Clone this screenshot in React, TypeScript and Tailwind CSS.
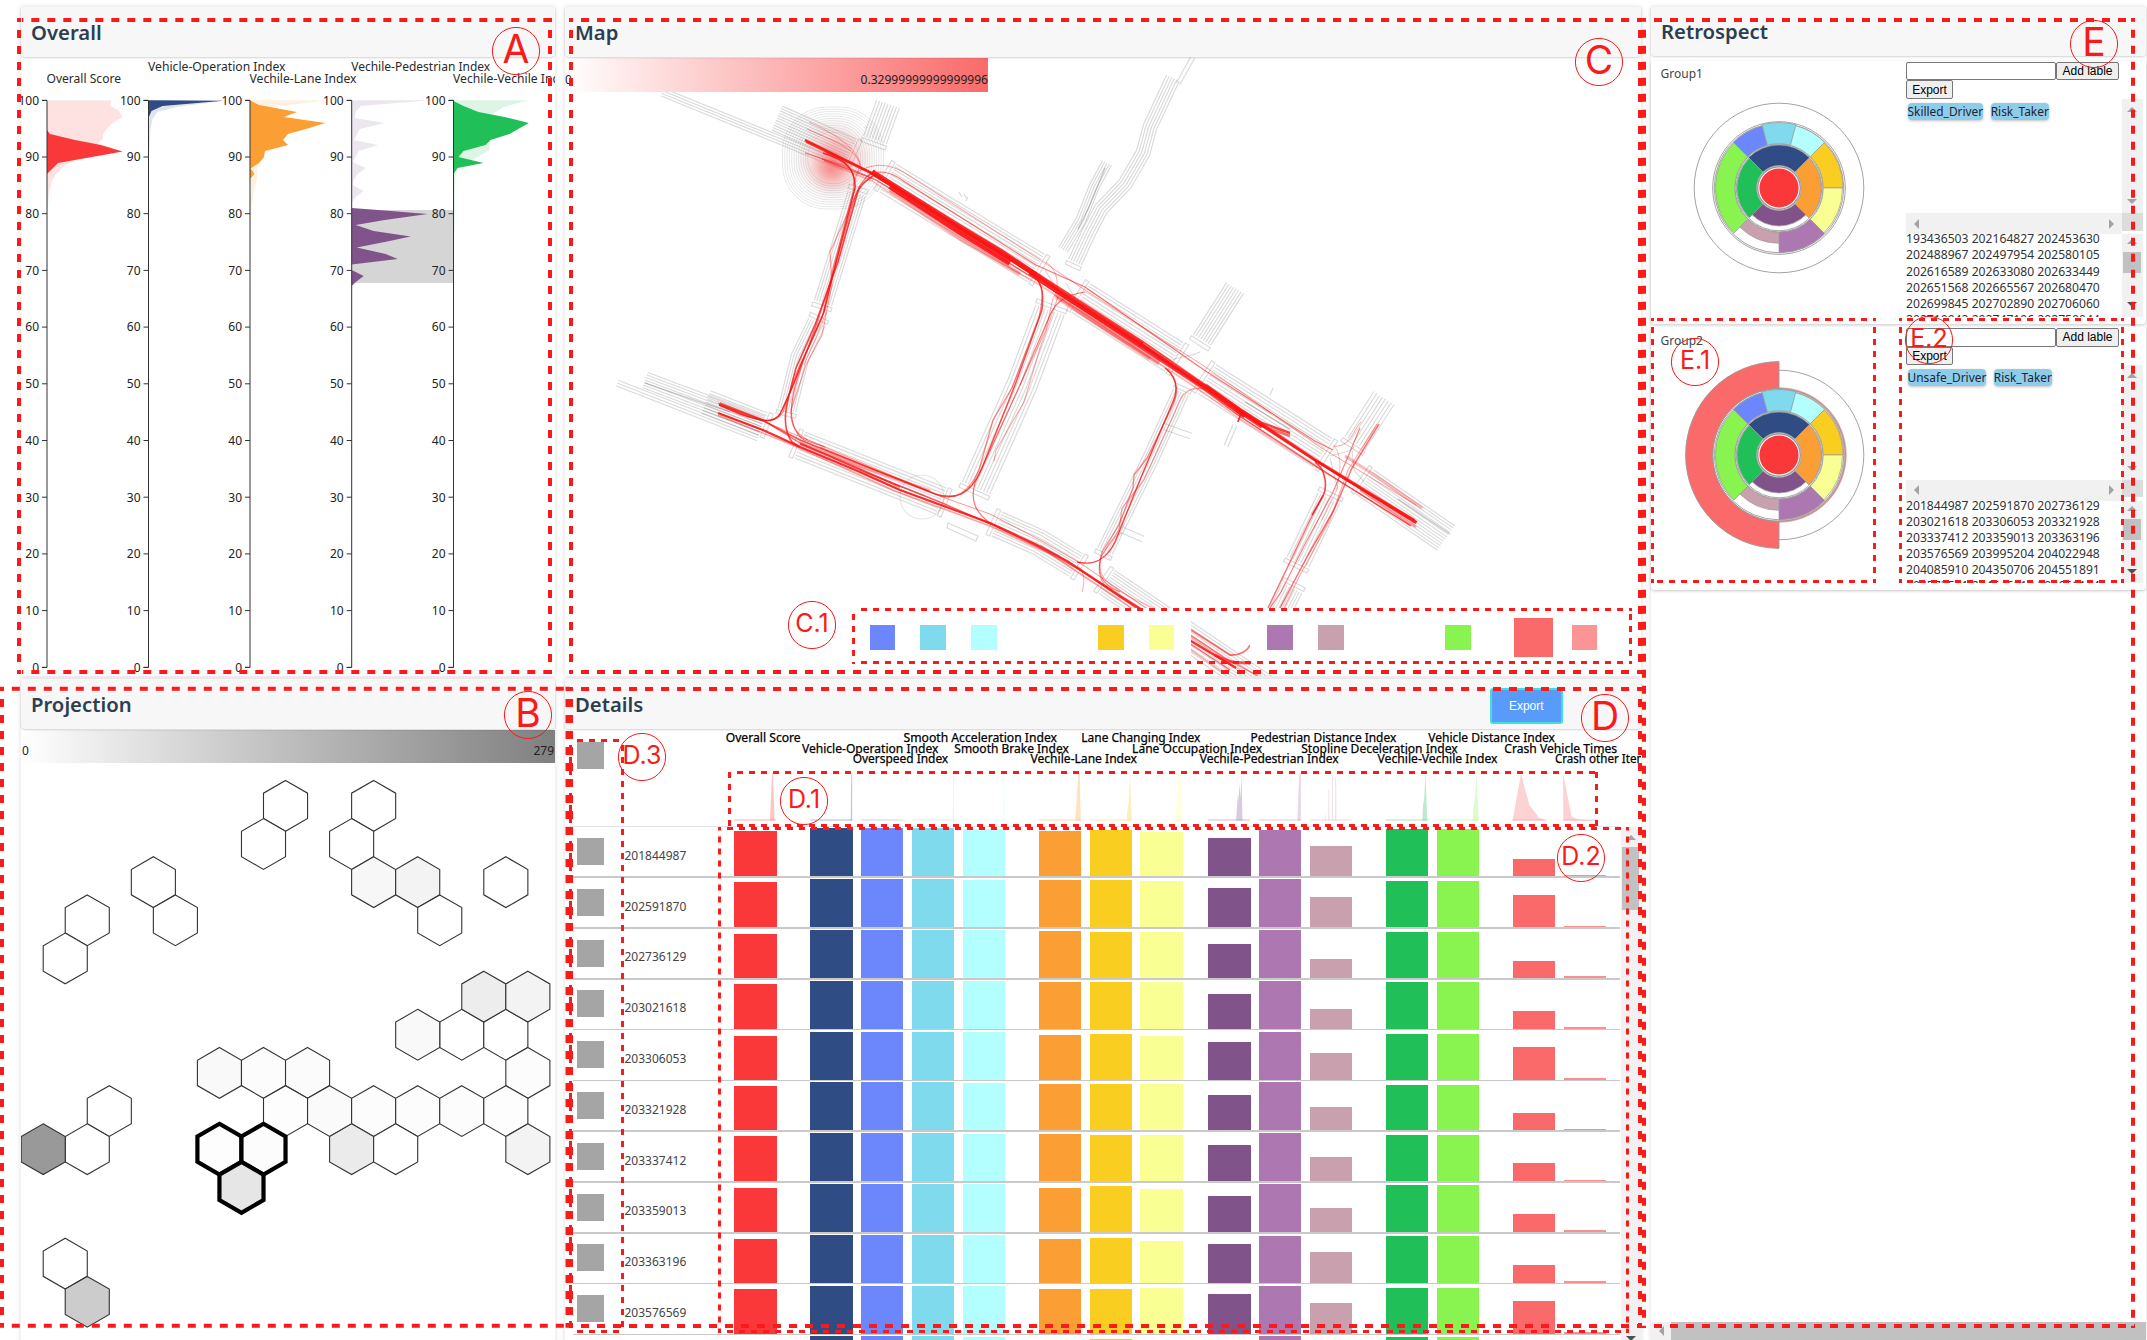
import React from "react";

type Pt = [number, number];

const C = {
  red: "#fb3839",
  navy: "#2f4d84",
  blue: "#6c87fc",
  cyan: "#80daed",
  ice: "#b3ffff",
  orange: "#fb9f35",
  yellow: "#f9ce20",
  lemon: "#f9ff92",
  purple: "#80548a",
  lilac: "#ad78b1",
  mauve: "#c9a1ae",
  green: "#20bf58",
  lime: "#89f34f",
  coral: "#fa6a6a",
  pink: "#fb9494",
};

const FONT = "font-['Noto_Sans','Open_Sans',sans-serif]";

const pts = (p: Pt[]) => p.map(([x, y]) => `${x.toFixed(2)},${y.toFixed(2)}`).join(" ");

/* ---------- Panels ---------- */

function Header({ title, children, short }: { title: string; children?: React.ReactNode; short?: boolean }) {
  return (
    <div
      className={
        "relative z-10 flex shrink-0 justify-between rounded-b bg-[#f7f7f7] shadow-[0_1px_2px_rgba(0,0,0,0.18)] " +
        (short ? "h-[49px]" : "h-[50px]")
      }
    >
      <h2
        className={
          "pl-[10px] text-[20.3px] leading-[26px] font-semibold text-[#2c3e50] " + (short ? "pt-[11px]" : "pt-[12px]")
        }
      >
        {title}
      </h2>
      {children}
    </div>
  );
}

/* ---------- Overall ---------- */

interface Axis {
  x: number;
  label: string;
  w: number;
  ly: number;
  color: string;
  pale: Pt[];
  solid: Pt[];
}

const AXES: Axis[] = [
  {
    x: 47, label: "Overall Score", w: 74.5, ly: 83.3, color: C.red,
    pale: [[0, 100.3], [64, 100.3], [63, 106], [71, 110], [75.6, 117], [64, 124], [56, 134], [56, 139], [50, 144], [28, 160], [17, 166], [9, 174], [5, 181], [2, 192], [1, 205], [0, 215]],
    solid: [[0, 130], [3, 134], [28, 140], [54, 145], [75.6, 151.5], [45, 157], [11, 163], [8, 166], [0, 174]],
  },
  {
    x: 148.5, label: "Vehicle-Operation Index", w: 137.5, ly: 70.7, color: C.navy,
    pale: [[0, 100.3], [75, 100.7], [28, 107], [9, 112], [4, 119], [1.8, 130], [0.8, 150], [0, 165]],
    solid: [[0, 100.3], [75, 100.7], [14, 106], [3, 111], [0, 118]],
  },
  {
    x: 250, label: "Vechile-Lane Index", w: 107, ly: 83.3, color: C.orange,
    pale: [[0, 100.3], [77, 100.3], [23, 107], [20, 140], [10, 163], [7, 170], [7, 180], [4, 190], [2, 205], [1, 215], [0, 230]],
    solid: [[0, 100.3], [9, 105], [47, 112], [34, 117], [75.3, 123], [56, 129], [38, 134], [33, 140], [38, 145], [15, 151], [14, 157], [9, 163], [0.5, 168.5], [4.5, 174], [0, 179]],
  },
  {
    x: 351.7, label: "Vechile-Pedestrian Index", w: 139, ly: 70.7, color: C.purple,
    pale: [[0, 100.3], [78, 100.3], [9, 106], [4, 112], [3, 118], [33, 123], [8, 129], [5, 135], [2, 140], [26, 145], [7, 151], [4, 157], [1, 162], [14, 168], [6, 174], [2, 180], [1, 185], [12, 191], [4, 197], [0, 203]],
    solid: [[0, 208], [33, 210.5], [76, 214], [33, 220], [4, 225], [22, 231], [59, 236.5], [33, 242], [5, 247.5], [34, 254], [46, 259], [0, 264.5], [0, 270], [12, 276], [4, 282], [0, 286]],
  },
  {
    x: 453.5, label: "Vechile-Vechile Index", w: 120, ly: 83.3, color: C.green,
    pale: [[0, 100.3], [75, 100.3], [50, 107], [38, 115], [36, 150], [2, 170], [1.5, 190], [1, 230], [0, 240]],
    solid: [[0, 101], [10, 106], [25, 112], [51, 117], [75.3, 123], [56, 134], [37, 140], [32, 145], [10, 151], [5, 157], [30, 163], [4, 168], [0, 174]],
  },
];

function OverallChart() {
  return (
    <svg viewBox="21 57 534 619" className="block h-[619px] w-[534px]">
      {AXES.map((a) => (
        <g key={a.label}>
          {a.label.includes("Pedestrian") && <rect x={351.7} y={210} width={101.8} height={73} fill="#d5d5d5" />}
          <polygon points={pts(a.pale.map(([x, y]) => [x + a.x, y]))} fill={a.color} opacity={0.15} />
          <polygon points={pts(a.solid.map(([x, y]) => [x + a.x, y]))} fill={a.color} />
          <path d={`M${a.x - 5} 100.5H${a.x}V667.5H${a.x - 5}`} fill="none" stroke="#333" />
          {Array.from({ length: 11 }, (_, i) => {
            const y = 667.3 - i * 56.7;
            return (
              <g key={i}>
                <line x1={a.x - 5} x2={a.x} y1={y} y2={y} stroke="#333" />
                <text x={a.x - 8} y={y + 4.3} textAnchor="end" fontSize={12} fill="#222">
                  {i * 10}
                </text>
              </g>
            );
          })}
          <text x={a.x - 0.5} y={a.ly} fontSize={12} fill="#2a2a2a" textLength={a.w} lengthAdjust="spacingAndGlyphs">
            {a.label}
          </text>
        </g>
      ))}
    </svg>
  );
}

/* ---------- Projection ---------- */

// [half-column index, row index, fill]
const HEXES: [number, number, string][] = [
  [11, -9, "#fff"], [10, -8, "#fff"], [15, -9, "#fff"], [14, -8, "#fff"], [15, -7, "#f7f7f7"], [17, -7, "#f3f3f3"],
  [18, -6, "#fff"], [21, -7, "#fff"], [5, -7, "#fff"], [6, -6, "#fff"], [2, -6, "#fff"], [1, -5, "#fff"],
  [19, -3, "#fff"], [21, -3, "#fff"], [20, -4, "#ededed"], [22, -4, "#f3f3f3"], [17, -3, "#f9f9f9"], [22, -2, "#fcfcfc"],
  [8, -2, "#f9f9f9"], [10, -2, "#fcfcfc"], [12, -2, "#fbfbfb"], [11, -1, "#fdfdfd"], [13, -1, "#fafafa"],
  [15, -1, "#fcfcfc"], [17, -1, "#fcfcfc"], [19, -1, "#fcfcfc"], [21, -1, "#fdfdfd"], [3, -1, "#fff"],
  [2, 0, "#fff"], [0, 0, "#999"], [14, 0, "#ebebeb"], [16, 0, "#fff"], [22, 0, "#f3f3f3"], [1, 3, "#fff"], [2, 4, "#ccc"],
];
const SELECTED: [number, number, string][] = [[8, 0, "#fdfdfd"], [10, 0, "#fcfcfc"], [9, 1, "#e6e6e6"]];

function Hex({ i, k, fill, w, c }: { i: number; k: number; fill: string; w: number; c: string }) {
  const x = 43.2 + 22.03 * i;
  const y = 1149.2 + 38.15 * k;
  const a = 22.03;
  const r = 25.4;
  return (
    <polygon
      points={pts([[x, y - r], [x + a, y - r / 2], [x + a, y + r / 2], [x, y + r], [x - a, y + r / 2], [x - a, y - r / 2]])}
      fill={fill}
      stroke={c}
      strokeWidth={w}
    />
  );
}

function Projection() {
  return (
    <>
      <div className="mt-px flex h-[33px] items-center justify-between bg-linear-to-r from-white to-[#808080] px-px pt-[9px] text-[12px] text-[#222]">
        <span>0</span>
        <span>279</span>
      </div>
      <svg viewBox="21 763 534 577" className="block h-[577px] w-[534px]">
        {HEXES.map(([i, k, f]) => (
          <Hex key={`${i},${k}`} i={i} k={k} fill={f} w={1.1} c="#333" />
        ))}
        {SELECTED.map(([i, k, f]) => (
          <Hex key={`${i},${k}`} i={i} k={k} fill={f} w={4.2} c="#000" />
        ))}
      </svg>
    </>
  );
}

/* ---------- Map ---------- */

function offset(line: Pt[], d: number): Pt[] {
  return line.map((p, i) => {
    const a = line[Math.max(0, i - 1)];
    const b = line[Math.min(line.length - 1, i + 1)];
    const dx = b[0] - a[0];
    const dy = b[1] - a[1];
    const l = Math.hypot(dx, dy);
    return [p[0] - (dy / l) * d, p[1] + (dx / l) * d];
  });
}

interface RoadDef {
  line: Pt[];
  w: number;
  n: number;
  caps?: "both" | "start" | "end";
}

const ROADS: RoadDef[] = [
  { line: [[662, 92], [775, 138], [845, 167]], w: 4, n: 4 },
  { line: [[777, 118], [851, 151]], w: 13, n: 11, caps: "end" },
  { line: [[888, 104], [875, 140]], w: 12, n: 9, caps: "end" },
  { line: [[888, 178], [1036, 268]], w: 16, n: 12, caps: "both" },
  { line: [[1081, 298], [1174, 357]], w: 17, n: 12, caps: "both" },
  { line: [[1207, 379], [1323, 453]], w: 17, n: 12, caps: "both" },
  { line: [[1365, 482], [1446, 538]], w: 15, n: 12, caps: "start" },
  { line: [[857, 193], [823, 303]], w: 9, n: 8, caps: "both" },
  { line: [[817, 322], [800, 357], [787, 410]], w: 9, n: 8, caps: "both" },
  { line: [[645, 380], [762, 424]], w: 8, n: 7 },
  { line: [[617, 383], [758, 438]], w: 3, n: 3 },
  { line: [[706, 402], [763, 424]], w: 12, n: 9, caps: "end" },
  { line: [[800, 445], [941, 501]], w: 14, n: 10, caps: "both" },
  { line: [[997, 524], [1038, 542], [1076, 565]], w: 13, n: 10, caps: "both" },
  { line: [[1107, 582], [1270, 692]], w: 14, n: 11, caps: "start" },
  { line: [[1050, 310], [1022, 385], [976, 488]], w: 15, n: 10, caps: "both" },
  { line: [[1181, 392], [1150, 460], [1105, 551]], w: 8, n: 7, caps: "both" },
  { line: [[1329, 498], [1298, 562]], w: 12, n: 9, caps: "both" },
  { line: [[1292, 588], [1272, 628]], w: 11, n: 9, caps: "start" },
  { line: [[1384, 398], [1355, 443]], w: 12, n: 8, caps: "end" },
  { line: [[1235, 288], [1202, 340]], w: 10, n: 8, caps: "end" },
  { line: [[1107, 163], [1094, 187], [1081, 220], [1063, 250]], w: 5, n: 5 },
  { line: [[1173, 78], [1150, 127], [1143, 153], [1125, 184], [1101, 209], [1089, 232], [1075, 262]], w: 7, n: 6, caps: "end" },
  { line: [[1193, 57], [1178, 84]], w: 2, n: 2 },
  { line: [[1165, 427], [1191, 436]], w: 3, n: 2 },
  { line: [[1120, 529], [1143, 539]], w: 3, n: 2 },
  { line: [[1235, 425], [1226, 446]], w: 2, n: 2 },
];

function Road({ line, w, n, caps }: RoadDef) {
  const cap = (p: Pt, q: Pt) => {
    const dx = p[0] - q[0];
    const dy = p[1] - q[1];
    const l = Math.hypot(dx, dy);
    const u: Pt = [dx / l, dy / l];
    const v: Pt = [-u[1], u[0]];
    const at = (s: number, t: number): Pt => [p[0] + u[0] * s + v[0] * t, p[1] + u[1] * s + v[1] * t];
    return <polygon points={pts([at(2, -w - 1), at(6, -w - 1), at(6, w + 1), at(2, w + 1)])} />;
  };
  const m = line.length;
  return (
    <g>
      {Array.from({ length: n }, (_, i) => (
        <polyline key={i} points={pts(offset(line, -w + (2 * w * i) / (n - 1)))} />
      ))}
      {(caps === "both" || caps === "start") && cap(line[0], line[1])}
      {(caps === "both" || caps === "end") && cap(line[m - 1], line[m - 2])}
    </g>
  );
}

// [path, opacity, width]
const TRIPS: [string, number, number][] = [
  ["M805 140L878 176L1035 275L1080 305L1142 345L1204 387L1240 411L1313 459L1416 523", 0.95, 2.4],
  ["M806 142L868 172L1035 272L1080 301L1142 341L1204 384L1240 409L1315 459L1415 520", 0.8, 1.6],
  ["M822 159L876 180L1035 279L1080 308L1142 349L1204 390L1238 415L1311 463L1411 526", 0.7, 1.3],
  ["M824 161L872 181L960 240L1038 284L1080 311L1142 352L1204 393L1240 419L1315 466L1410 525", 0.3, 1.5],
  ["M872 172L915 199L960 227L1000 251L1036 275", 0.9, 5.5],
  ["M890 186L960 232L1010 263", 0.9, 6],
  ["M890 190L960 237L1020 274", 0.35, 4],
  ["M1030 272L1058 291L1100 318L1142 345", 0.9, 6],
  ["M1056 293L1100 323L1160 362", 0.35, 8],
  ["M1056 297L1100 326L1150 359", 0.25, 4],
  ["M1140 344L1174 367L1206 388L1245 416", 0.9, 5],
  ["M1206 385L1240 409L1262 423L1290 433", 0.8, 2.4],
  ["M1236 410L1262 426L1290 436", 0.6, 2.4],
  ["M1240 412L1262 427", 0.8, 3.5],
  ["M807 129C828 139 856 147 860 165L853 185", 0.4, 1],
  ["M809 122C832 132 862 150 861 170", 0.35, 1],
  ["M805 153L842 165L872 178", 0.5, 1.3],
  ["M823 153C848 160 856 172 855 188L836 262L824 312L802 362C792 390 784 406 780 414C774 424 760 421 740 414L719 405", 0.9, 1.5],
  ["M826 152C850 160 857 175 853 192L834 265L822 318L797 372L783 412C776 423 765 422 750 417L718 403", 0.55, 1.2],
  ["M873 176C860 184 858 190 856 198L838 262L815 325L796 368C786 405 780 425 792 442L800 447", 0.8, 1.6],
  ["M875 170C860 180 856 192 851 210L834 270L818 320L803 362C791 395 784 425 804 440L825 447", 0.6, 1.2],
  ["M860 186L830 252L832 285L822 335L806 365L791 410C790 424 796 434 808 440", 0.4, 1.2],
  ["M828 306C824 308 822 312 826 313L815 340L804 365", 0.35, 1],
  ["M858 172C874 162 890 164 905 173L1045 263L1085 290L1204 366L1320 447L1345 462L1416 505", 0.4, 1],
  ["M868 176C880 168 892 172 905 182L1036 265L1085 287L1204 370L1315 441L1333 450", 0.6, 1.1],
  ["M1046 262C1060 272 1059 290 1053 298L1046 330L1020 385", 0.35, 1],
  ["M1035 277C1044 286 1043 297 1042 310L1015 385L982 468C970 496 955 500 935 494L800 440L760 419L719 404", 0.75, 1.5],
  ["M1037 279C1046 292 1041 305 1039 318L1012 388L993 420L979 470C968 495 954 499 940 496L820 447", 0.5, 1.3],
  ["M1085 292C1065 295 1056 302 1050 315L1020 385L975 483C970 500 975 512 990 523", 0.6, 1.2],
  ["M1058 297L1040 348L1024 402L996 450L994 461", 0.35, 1.1],
  ["M719 405L763 421L945 498L990 514L1040 540L1080 563L1130 597L1240 670", 0.45, 1],
  ["M718 413L763 430L800 447L860 472L900 490L990 523L1035 544L1067 561L1120 596L1191 641L1236 668", 0.9, 2.2],
  ["M720 403L763 420L800 443L870 474L940 502L995 526L1040 548L1080 570L1142 612L1230 670", 0.65, 1.4],
  ["M718 415L790 444L895 491L990 526L1050 554L1120 600L1225 674", 0.4, 1.5],
  ["M800 443L860 466L930 491", 0.4, 3],
  ["M800 444L860 469L900 487", 0.6, 2],
  ["M1165 368C1177 377 1179 389 1172 404L1142 475L1115 542C1106 560 1094 566 1077 562", 0.8, 1.4],
  ["M1167 369C1179 381 1178 393 1173 405L1147 458L1134 475L1133 488L1119 525L1102 552C1096 572 1100 584 1120 592", 0.5, 1.3],
  ["M1204 389C1188 386 1181 394 1175 412L1144 480L1122 508L1119 530L1101 557C1096 574 1102 586 1112 590", 0.4, 1.1],
  ["M1122 533C1112 537 1105 549 1101 557C1097 576 1104 587 1154 608", 0.3, 1],
  ["M1077 565C1085 572 1085 582 1082 592", 0.35, 1],
  ["M1240 411C1242 416 1238 419 1238 422", 0.9, 1.6],
  ["M1315 462C1327 470 1327 489 1323 496L1312 515", 0.8, 1.6],
  ["M1323 495L1310 520L1290 562L1268 608", 0.6, 1.5],
  ["M1360 428L1333 492L1304 546L1281 592L1270 608", 0.55, 1.1],
  ["M1379 424L1352 468L1334 510L1308 555L1280 608", 0.6, 1.5],
  ["M1377 424L1348 470L1330 520L1299 577L1284 608", 0.35, 1.2],
  ["M1333 446C1350 448 1352 432 1361 422", 0.4, 1],
  ["M1334 446C1343 456 1340 475 1336 492L1322 520", 0.3, 1],
  ["M1345 456L1376 476L1422 508", 0.3, 3],
  ["M1313 459L1345 479L1417 522", 0.9, 2],
  ["M1360 490L1416 527", 0.4, 2.5],
  ["M1191 630L1230 655C1240 656 1248 650 1250 645", 0.6, 2],
  ["M1215 655C1232 665 1240 662 1250 663", 0.7, 3],
  ["M1190 635L1225 658L1258 676", 0.5, 1.5],
];

function MapView() {
  return (
    <svg viewBox="565 57 1076 619" className="block h-[619px] w-[1076px]">
      <defs>
        <linearGradient id="scale-red">
          <stop offset="0" stopColor="#fff" />
          <stop offset="1" stopColor={C.coral} />
        </linearGradient>
        <radialGradient id="heat">
          <stop offset="0" stopColor="#f55a5a" stopOpacity="0.6" />
          <stop offset="0.4" stopColor="#f06a6a" stopOpacity="0.35" />
          <stop offset="0.75" stopColor="#e0a0a0" stopOpacity="0.13" />
          <stop offset="1" stopColor="#ccc" stopOpacity="0" />
        </radialGradient>
        <clipPath id="view">
          <path d="M565 57H1641V608H565ZM1191 620H1250V662H1191ZM1191 662H1272V676H1191Z" />
        </clipPath>
      </defs>
      <g clipPath="url(#view)">
        <g fill="none" stroke="#000" strokeOpacity={0.15} strokeWidth={1.15}>
          {ROADS.map((r, i) => (
            <Road key={i} {...r} />
          ))}
          <circle cx={922} cy={497} r={22} strokeOpacity={0.1} />
          <polygon points="948,523 978,536 976,541 947,528" />
          <path d="M1045 270L1058 292L1040 275M1066 283L1076 300M1172 360C1180 356 1188 358 1200 352M1330 456C1345 452 1352 452 1354 446M1352 450L1354 470L1364 482M1330 458L1338 490" />
          <path d="M959 192l3 5M964 194l3 5M968 197l-2 4M1273 388l-3 7" />
          <path strokeOpacity={0.22} d="M645 383L700 402L730 412M1245 402L1290 429M1398 499L1450 534M860 470L925 496M1105 168L1090 205L1078 229M1040 545L1060 556" />
        </g>
        <circle cx={834} cy={160} r={44} fill="url(#heat)" />
        <circle cx={831} cy={170} r={26} fill="url(#heat)" opacity={0.7} />
        <g fill="none" stroke="#000" strokeOpacity={0.1} strokeWidth={0.9}>
          {Array.from({ length: 12 }, (_, i) => (
            <rect key={i} x={782.5 + i * 2.3} y={107 + i * 2.3} width={101 - i * 4.6} height={102 - i * 4.6} rx={44 - i * 1.8} />
          ))}
        </g>
        <g fill="none" stroke="#fb1414" strokeLinejoin="round">
          {TRIPS.map(([d, o, w], i) => (
            <path key={i} d={d} opacity={o} strokeWidth={w} />
          ))}
        </g>
      </g>
      <rect x={565} y={58} width={423} height={34} fill="url(#scale-red)" />
      <text x={565} y={83.7} fontSize={12} fill="#222">0</text>
      <text x={988} y={83.7} fontSize={12} fill="#222" textAnchor="end" textLength={127.5} lengthAdjust="spacingAndGlyphs">
        0.32999999999999996
      </text>
    </svg>
  );
}

function MapLegend() {
  return (
    <div className="absolute top-[611px] left-[304.5px] flex h-[39px] items-center">
      <span className="size-[25.5px] bg-[#6c87fc]" />
      <span className="ml-[25.3px] size-[25.5px] bg-[#80daed]" />
      <span className="ml-[25.3px] size-[25.5px] bg-[#b3ffff]" />
      <span className="ml-[101.5px] size-[25.5px] bg-[#f9ce20]" />
      <span className="ml-[25.3px] size-[25.5px] bg-[#f9ff92]" />
      <span className="ml-[93px] size-[25.5px] bg-[#ad78b1]" />
      <span className="ml-[25.3px] size-[25.5px] bg-[#c9a1ae]" />
      <span className="ml-[101.5px] size-[25.5px] bg-[#89f34f]" />
      <span className="ml-[43.5px] size-[39px] bg-[#fa6a6a]" />
      <span className="ml-[18.5px] size-[25.5px] bg-[#fb9494]" />
    </div>
  );
}

/* ---------- Details ---------- */

interface Column {
  label: string;
  x: number;
  w: number;
  level: number;
  color: string;
  shape: Pt[];
}

const COLUMNS: Column[] = [
  { label: "Overall Score", x: 734, w: 75, level: 0, color: C.red, shape: [[36, 0], [38, 47], [39, 47], [40.5, 0]] },
  { label: "Vehicle-Operation Index", x: 810.2, w: 136.5, level: 1, color: C.navy, shape: [[40.5, 0], [41, 47], [42, 47], [42, 0]] },
  { label: "Overspeed Index", x: 861, w: 95.5, level: 2, color: C.blue, shape: [] },
  { label: "Smooth Acceleration Index", x: 911.8, w: 153.5, level: 0, color: C.cyan, shape: [[41, 0], [41.5, 47], [42, 47], [42, 0]] },
  { label: "Smooth Brake Index", x: 962.6, w: 114.5, level: 1, color: C.ice, shape: [[41, 0], [41.5, 47], [42, 47], [42, 0]] },
  { label: "Vechile-Lane Index", x: 1038.8, w: 106.5, level: 2, color: C.orange, shape: [[36.5, 0], [39.5, 47], [41, 47], [42, 0]] },
  { label: "Lane Changing Index", x: 1089.6, w: 119, level: 0, color: C.yellow, shape: [[37, 0], [38.5, 18], [39, 15], [40.5, 47], [42, 0]] },
  { label: "Lane Occupation Index", x: 1140.4, w: 130, level: 1, color: C.lemon, shape: [[34, 0], [36, 12], [38, 47], [41, 47], [42, 0]] },
  { label: "Vechile-Pedestrian Index", x: 1208, w: 139, level: 2, color: C.purple, shape: [[28, 0], [30, 27], [30.5, 20], [31.5, 37], [32.5, 22], [33.5, 47], [34.5, 0]] },
  { label: "Pedestrian Distance Index", x: 1258.8, w: 145.7, level: 0, color: C.lilac, shape: [[38.5, 0], [40.5, 47], [42, 47], [42, 0]] },
  { label: "Stopline Deceleration Index", x: 1309.5, w: 156.5, level: 1, color: C.mauve, shape: [[15, 0], [15.8, 8], [16.5, 0], [18.7, 0], [18.9, 31], [19.7, 31], [20, 0], [22.2, 0], [22.4, 46], [23.4, 46], [23.6, 0], [25.5, 0], [25.7, 43], [26.7, 43], [27, 0]] },
  { label: "Vechile-Vechile Index", x: 1385.8, w: 120, level: 2, color: C.green, shape: [[36.5, 0], [37.5, 20], [38, 16], [39.7, 47], [41.5, 0]] },
  { label: "Vehicle Distance Index", x: 1436.5, w: 126.8, level: 0, color: C.lime, shape: [[36, 0], [37.5, 20], [38, 16], [40, 47], [42, 0]] },
  { label: "Crash Vehicle Times", x: 1512.6, w: 112.8, level: 1, color: C.coral, shape: [[0, 0], [8.5, 47], [12, 33], [17, 15], [27, 2.5], [34, 0]] },
  { label: "Crash other Items", x: 1563.2, w: 98, level: 2, color: C.coral, shape: [[0, 0], [0, 47], [4, 26], [8.5, 4], [15, 1], [33, 0]] },
];

const GROUPS = [[0], [1, 2, 3, 4], [5, 6, 7], [8, 9, 10], [11, 12], [13, 14]];

interface RowData {
  id: string;
  v: number[];
}

const row = (id: string, r: number, o: number, y: number, l: number, p: number, q: number, m: number, g: number, c: number): RowData => ({
  id,
  v: [r, 48, 48, 48, 47.6, o, y, l, p, q, m, g, g, c, 1.5],
});

const ROWS: RowData[] = [
  row("201844987", 45, 45.7, 46.3, 44.7, 38.7, 46.7, 30.3, 47.3, 17),
  row("202591870", 45, 47.3, 47.3, 46, 39, 48, 30, 46.3, 32.3),
  row("202736129", 44, 46.7, 46.3, 46.3, 34, 48, 19.3, 46.3, 17.3),
  row("203021618", 44.3, 47, 47, 46.3, 34.3, 48, 20, 46.5, 17.7),
  row("203306053", 44, 45, 46, 43.7, 38, 48, 27, 46, 33),
  row("203321928", 44.3, 46.7, 46.5, 46.3, 35.7, 48, 23.7, 45.7, 17.3),
  row("203337412", 44.7, 46.7, 46.5, 46.3, 35.7, 48, 23.7, 46.3, 17.7),
  row("203359013", 44, 44, 46, 43, 35.7, 47.7, 23.7, 47, 17.7),
  row("203363196", 44, 44, 44.5, 42, 38.3, 46.3, 30.7, 46.7, 17.7),
  row("203576569", 44.7, 44.7, 45, 45.3, 39.3, 47.7, 30.7, 45.3, 33),
  row("203576833", 44, 44, 45, 44, 38, 48, 27, 47, 17),
];

function Arrow({ dir, color = "#a3a3a3" }: { dir: "up" | "down" | "left" | "right"; color?: string }) {
  const d = { up: "M0 5L5 0L10 5Z", down: "M0 0L5 5L10 0Z", left: "M5 0L0 5L5 10Z", right: "M0 0L5 5L0 10Z" }[dir];
  const h = dir === "up" || dir === "down";
  return (
    <svg width={h ? 10 : 5} height={h ? 5 : 10} className="shrink-0">
      <path d={d} fill={color} />
    </svg>
  );
}

function Details() {
  return (
    <>
      <svg viewBox="565 729 1076 98" className="block h-[98px] w-[1076px] shrink-0">
        <rect x={577} y={742} width={27} height={27} fill="#a5a5a5" />
        {COLUMNS.map((c) => (
          <g key={c.label}>
            <text
              x={c.x - 8.3}
              y={742.3 + c.level * 10.2}
              fontSize={12}
              fill="#000"
              stroke="#000"
              strokeWidth={0.25}
              textLength={c.w}
              lengthAdjust="spacingAndGlyphs"
            >
              {c.label}
            </text>
            <rect x={c.x} y={819.3} width={c.label.startsWith("Crash") ? 34 : 42} height={1.5} fill={c.color} opacity={0.25} />
            <polygon points={pts(c.shape.map(([x, y]) => [c.x + x, 820.5 - y]))} fill={c.color} opacity={0.3} />
          </g>
        ))}
        <line x1={565} x2={1620} y1={826.5} y2={826.5} stroke="#e3e3e3" />
      </svg>
      <div className="flex h-[513px] overflow-hidden">
        <div className="w-[1055px]">
          {ROWS.map((r) => (
            <div key={r.id} className="h-[50.8px]">
              <div className="flex h-[49.4px] items-end">
                <div className="mb-[11.4px] ml-[12px] size-[27px] bg-[#a5a5a5]" />
                <div className="mb-[12.6px] ml-[20.5px] w-[109.5px] text-[12px] leading-[16px] text-[#444]">{r.id}</div>
                <div className="flex items-end gap-[33.7px]">
                  {GROUPS.map((g, gi) => (
                    <div key={gi} className={"flex items-end gap-[8.3px]" + (gi === 3 ? " -ml-[8.4px]" : "")}>
                      {g.map((i) => (
                        <div
                          key={i}
                          className="w-[42.5px]"
                          style={{ height: r.v[i], backgroundColor: COLUMNS[i].color, opacity: i === 14 ? 0.75 : 1 }}
                        />
                      ))}
                    </div>
                  ))}
                </div>
              </div>
              <div className="ml-[8px] h-[1.6px] bg-[#c9c9c9]" />
            </div>
          ))}
        </div>
        <div className="ml-px flex w-[19.5px] flex-col items-center bg-[#f1f1f1] pt-[8px]">
          <Arrow dir="up" />
          <div className="mt-[7px] h-[63px] w-[17px] shrink-0 bg-[#c1c1c1]" />
          <div className="mt-[426px]">
            <Arrow dir="down" color="#505050" />
          </div>
        </div>
      </div>
    </>
  );
}

/* ---------- Retrospect ---------- */

function sector(r0: number, r1: number, a0: number, a1: number) {
  const p = (r: number, a: number) => {
    const t = ((a - 90) * Math.PI) / 180;
    return `${(r * Math.cos(t)).toFixed(2)} ${(r * Math.sin(t)).toFixed(2)}`;
  };
  const big = a1 - a0 > 180 ? 1 : 0;
  return `M${p(r0, a0)}L${p(r1, a0)}A${r1} ${r1} 0 ${big} 1 ${p(r1, a1)}L${p(r0, a1)}A${r0} ${r0} 0 ${big} 0 ${p(r0, a0)}Z`;
}

const WHEEL: [number, number, number, number, string][] = [
  [44.3, 64.5, -45, -15, C.blue],
  [44.3, 65.5, -15, 15, C.cyan],
  [44.3, 64.5, 15, 45, C.ice],
  [44.3, 64, 45, 90, C.yellow],
  [44.3, 63.5, 90, 135, C.lemon],
  [44.3, 64.5, 135, 180, C.lilac],
  [44.3, 55.3, 180, 225, C.mauve],
  [44.3, 63.7, 225, 315, C.lime],
  [22.5, 43, -45, 45, C.navy],
  [22.5, 42.3, 45, 135, C.orange],
  [22.5, 38, 135, 225, C.purple],
  [22.5, 42, 225, 315, C.green],
];

function Wheel({ risk }: { risk: boolean }) {
  return (
    <svg viewBox="-95 -95 190 190" className="block size-[190px]">
      <g fill="none" stroke="#999" strokeWidth={0.9}>
        <circle r={84.8} />
        {risk && (
          <>
            <path d={sector(66.2, 93.4, 180, 360)} fill={C.coral} />
            <path d={sector(65.5, 67.3, 0, 180)} fill="#e9a0a0" stroke="#c88" strokeWidth={0.5} />
          </>
        )}
        <circle r={66.3} fill={risk ? "none" : "#fff"} />
        <circle r={64.8} />
        <circle r={44} />
        <circle r={42.8} />
        {WHEEL.map(([a, b, c, d, f]) => (
          <path key={f} d={sector(a, b, c, d)} fill={f} strokeWidth={0.7} />
        ))}
        <circle r={21.3} fill="#fff" strokeWidth={1.4} />
        <circle r={19.6} fill={C.red} stroke="none" />
      </g>
    </svg>
  );
}

interface GroupProps {
  name: string;
  tags: string[];
  ids: string[];
  risk: boolean;
}

const SYS = "font-['Liberation_Sans',Arial,sans-serif]";

function GroupCard({ name, tags, ids, risk }: GroupProps) {
  return (
    <div className="flex h-[263px] rounded bg-white pt-px shadow-[0_1px_3px_rgba(0,0,0,0.22)]">
      <div className="w-[255px]">
        <div className="pt-[4.5px] pl-[9.5px] text-[12px] leading-[16px] text-[#444]">{name}</div>
        <div className="mt-[11px] ml-[33px]">
          <Wheel risk={risk} />
        </div>
      </div>
      <div className="w-[237px]">
        <div className={"text-[12px] text-black " + SYS}>
          <div className="flex h-[18.7px]">
            <div className="w-[150px] rounded-[2px] border border-[#767676] bg-white" />
            <div className="flex w-[63px] items-center justify-center rounded-[2px] border border-[#767676] bg-[#efefef]">
              Add lable
            </div>
          </div>
          <div className="flex h-[18.7px] w-[47px] items-center justify-center rounded-[2px] border border-[#767676] bg-[#efefef]">
            Export
          </div>
        </div>
        <div className="flex h-[114.5px]">
          <div className="flex w-[215.5px] items-start gap-[7.5px] pt-[4px] pl-[1.5px]">
            {tags.map((t) => (
              <span
                key={t}
                className="rounded-[4px] bg-[#8ecdea] text-[11.9px] leading-[17px] text-[#223] shadow-[0_1px_3px_rgba(0,0,0,0.25)]"
              >
                {t}
              </span>
            ))}
          </div>
          <div className="flex w-[21px] flex-col items-center justify-between bg-[#f1f1f1] pt-[8px] pb-[9px]">
            <Arrow dir="up" />
            <Arrow dir="down" />
          </div>
        </div>
        <div className="flex h-[20.7px]">
          <div className="flex w-[215.5px] items-center justify-between bg-[#f1f1f1] px-[8px]">
            <Arrow dir="left" />
            <Arrow dir="right" />
          </div>
          <div className="h-[17.5px] w-[21px] bg-[#dcdcdc]" />
        </div>
        <div className="flex h-[82.5px] overflow-hidden">
          <div className="-mt-[2.7px] w-[215.5px] text-[12.15px] leading-[16.1px] text-[#333]">
            {ids.map((l) => (
              <div key={l}>{l}</div>
            ))}
          </div>
          <div className="-mt-[3px] flex w-[21px] flex-col items-center bg-[#f1f1f1] pt-[8px]">
            <Arrow dir="up" />
            <div className="mt-[8px] h-[21px] w-[17.5px] bg-[#c1c1c1]" />
            <div className="mt-[29px]">
              <Arrow dir="down" color="#505050" />
            </div>
          </div>
        </div>
      </div>
    </div>
  );
}

/* ---------- Annotations ---------- */

interface Frame {
  x: [number, number];
  y: [number, number];
  w: number;
  px: number;
  py: number;
}

// px / py: coordinate where one dash begins on the horizontal / vertical sides
const FRAMES: Frame[] = [
  { x: [19, 550], y: [20, 672], w: 4, px: 31.3, py: 30 },
  { x: [2, 567.5], y: [688.7, 1325.7], w: 4, px: 11.8, py: 699 },
  { x: [571, 1640], y: [20, 672], w: 4, px: 581, py: 30 },
  { x: [571, 1640], y: [689, 1326], w: 4, px: 581, py: 699 },
  { x: [1644, 2133], y: [20, 1326], w: 4, px: 1654, py: 29.7 },
  { x: [853.5, 1630.5], y: [609.5, 662.5], w: 3, px: 861, py: 638 },
  { x: [570.5, 622.5], y: [740.5, 1331.5], w: 3, px: 577, py: 985 },
  { x: [729.5, 1596.5], y: [772.5, 825.5], w: 3, px: 737, py: 784 },
  { x: [719.5, 1627.5], y: [828.5, 1331.5], w: 3, px: 727, py: 980.5 },
  { x: [1652.5, 1874.5], y: [319.5, 581.5], w: 3, px: 1657, py: 327 },
  { x: [1900.5, 2122.5], y: [319.5, 581.5], w: 3, px: 1907, py: 327 },
];

const MARKS: [string, number, number][] = [
  ["A", 516, 51], ["B", 528, 715], ["C", 1599, 62], ["C.1", 812, 625], ["D", 1605, 718], ["D.1", 804, 801],
  ["D.2", 1581, 858], ["D.3", 642, 757], ["E", 2094, 44], ["E.1", 1695, 362], ["E.2", 1929, 340],
];

function Annotations() {
  return (
    <svg viewBox="0 0 2147 1340" className="pointer-events-none absolute inset-0 z-20 h-[1340px] w-[2147px]">
      <g stroke="#fb1919">
        {FRAMES.map((f, i) => {
          const h = f.w / 2;
          const dash = f.w * 2;
          const [x0, x1] = f.x;
          const [y0, y1] = f.y;
          const common = { strokeWidth: f.w, strokeDasharray: `${dash} ${dash}` };
          const xs = x0 + h + 1;
          return (
            <g key={i}>
              <line {...common} x1={xs} x2={x1 + h} y1={y0} y2={y0} strokeDashoffset={xs - f.px} />
              <line {...common} x1={xs} x2={x1 + h} y1={y1} y2={y1} strokeDashoffset={xs - f.px} />
              <line {...common} x1={x0} x2={x0} y1={y0 - h} y2={y1 + h} strokeDashoffset={y0 - h - f.py} />
              <line {...common} x1={x1} x2={x1} y1={y0 - h} y2={y1 + h} strokeDashoffset={y0 - h - f.py} />
            </g>
          );
        })}
      </g>
      <g className="font-['Inter',sans-serif]" textAnchor="middle" fill="#fb1919">
        {MARKS.map(([t, x, y]) => (
          <g key={t}>
            <circle cx={x} cy={y} r={23.6} fill="none" stroke="#fb1919" />
            <text x={x} y={t.length > 1 ? y + 7 : y + 11.7} fontSize={t.length > 1 ? 25 : 39}>
              {t}
            </text>
          </g>
        ))}
      </g>
    </svg>
  );
}

/* ---------- Page ---------- */

export default function App() {
  return (
    <div className={"relative flex h-[1340px] w-[2147px] gap-[10px] overflow-hidden bg-white pt-[7px] pl-[21px] " + FONT}>
      <div className="flex w-[534px] shrink-0 flex-col gap-[3px]">
        <section className="h-[669px] shrink-0 shadow-[0_0_5px_rgba(0,0,0,0.14)]">
          <Header title="Overall" />
          <OverallChart />
        </section>
        <section className="h-[670px] shrink-0 shadow-[0_0_5px_rgba(0,0,0,0.14)]">
          <Header title="Projection" />
          <Projection />
        </section>
      </div>
      <div className="flex w-[1076px] shrink-0 flex-col gap-[3px]">
        <section className="relative h-[669px] shrink-0 shadow-[0_0_5px_rgba(0,0,0,0.14)]">
          <Header title="Map" />
          <MapView />
          <MapLegend />
        </section>
        <section className="h-[670px] shrink-0 shadow-[0_0_5px_rgba(0,0,0,0.14)]">
          <Header title="Details">
            <button
              className={
                "mt-[9px] mr-[78.5px] h-[36px] w-[72.5px] rounded-[3px] border-2 border-[#40e0d8] bg-[#589bfb] text-[12px] text-white " +
                SYS
              }
            >
              Export
            </button>
          </Header>
          <Details />
        </section>
      </div>
      <section className="flex w-[495px] shrink-0 flex-col shadow-[0_0_5px_rgba(0,0,0,0.14)]">
        <Header title="Retrospect" short />
        <div className="mt-[4.5px] flex flex-1 flex-col gap-[3.5px]">
          <GroupCard
            name="Group1"
            tags={["Skilled_Driver", "Risk_Taker"]}
            risk={false}
            ids={[
              "193436503 202164827 202453630",
              "202488967 202497954 202580105",
              "202616589 202633080 202633449",
              "202651568 202665567 202680470",
              "202699845 202702890 202706060",
              "202710942 202747196 202750044",
            ]}
          />
          <GroupCard
            name="Group2"
            tags={["Unsafe_Driver", "Risk_Taker"]}
            risk
            ids={[
              "201844987 202591870 202736129",
              "203021618 203306053 203321928",
              "203337412 203359013 203363196",
              "203576569 203995204 204022948",
              "204085910 204350706 204551891",
              "204572571 204646119 204661104",
            ]}
          />
        </div>
        <div className="flex h-[18px] items-center gap-[7px] bg-[#f1f1f1] pl-[8px]">
          <Arrow dir="left" />
          <div className="h-full flex-1 bg-[#c1c1c1]" />
        </div>
      </section>
      <Annotations />
    </div>
  );
}
